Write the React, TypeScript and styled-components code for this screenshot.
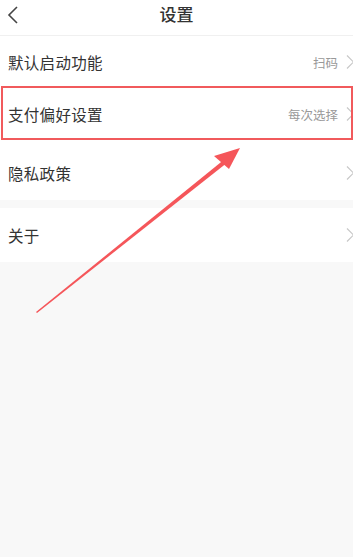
import React from "react";
import styled, { createGlobalStyle } from "styled-components";

const Global = createGlobalStyle`
  html, body { margin: 0; padding: 0; background: #f8f8f8; }
  body { font-family: "Noto Sans CJK SC", "Noto Sans", sans-serif; }
  * { box-sizing: border-box; }
`;

const Page = styled.div`
  position: relative;
  width: 353px;
  height: 557px;
  background: #f8f8f8;
  overflow: hidden;
`;

const Header = styled.div`
  position: relative;
  height: 36px;
  background: #fff;
  border-bottom: 1px solid #f0f0f0;
  display: flex;
  align-items: center;
  justify-content: center;
`;

const BackButton = styled.div`
  position: absolute;
  left: 6px;
  top: 5px;
  width: 14px;
  height: 20px;
  display: flex;
`;

const Title = styled.div`
  font-size: 17px;
  font-weight: 500;
  color: #333;
  margin-top: -9px;
`;

const Group = styled.div<{ gap?: number }>`
  background: #fff;
  margin-bottom: ${(p) => p.gap ?? 0}px;
`;

const Row = styled.div<{ h: number; offset?: number; highlighted?: boolean }>`
  position: relative;
  height: ${(p) => p.h}px;
  display: flex;
  align-items: center;
  padding-left: 8px;
  padding-right: 0;
  padding-top: ${(p) => p.offset ?? 0}px;
  background: #fff;
  ${(p) =>
    p.highlighted
      ? `&::after {
    content: "";
    position: absolute;
    left: 1px;
    right: 0px;
    top: -2px;
    bottom: 0px;
    border: 2px solid #f15a5c;
    pointer-events: none;
  }`
      : ""}
`;

const Label = styled.div`
  flex: 1;
  font-size: 15.5px;
  color: #333;
  letter-spacing: 0.3px;
`;

const Value = styled.div`
  font-size: 12.5px;
  color: #999;
  margin-right: 8px;
`;

const Chevron = styled.div`
  width: 9px;
  height: 16px;
  display: flex;
  margin-right: -2px;
`;

const Arrow = styled.svg`
  position: absolute;
  left: 0;
  top: 0;
  pointer-events: none;
`;

const ChevronIcon = () => (
  <Chevron>
    <svg width="9" height="16" viewBox="0 0 9 16">
      <path d="M1 1.5 L7.5 8 L1 14.5" fill="none" stroke="#c8c8c8" strokeWidth="1.2" />
    </svg>
  </Chevron>
);

export default function App() {
  return (
    <>
      <Global />
      <Page>
        <Header>
          <BackButton>
            <svg width="14" height="20" viewBox="0 0 14 20">
              <path d="M11 2 L3 10 L11 18" fill="none" stroke="#444" strokeWidth="1.6" />
            </svg>
          </BackButton>
          <Title>设置</Title>
        </Header>
        <Group>
          <Row h={52}>
            <Label>默认启动功能</Label>
            <Value>扫码</Value>
            <ChevronIcon />
          </Row>
          <Row h={52} highlighted>
            <Label>支付偏好设置</Label>
            <Value>每次选择</Value>
            <ChevronIcon />
          </Row>
        </Group>
        <Group gap={8}>
          <Row h={60} offset={6}>
            <Label>隐私政策</Label>
            <ChevronIcon />
          </Row>
        </Group>
        <Group>
          <Row h={54}>
            <Label>关于</Label>
            <ChevronIcon />
          </Row>
        </Group>
        <Arrow width="353" height="557" viewBox="0 0 353 557">
          <polygon points="36,312 223,160.5 225.5,164 37,313" fill="#f5565a" />
          <polygon points="240,148 214,156 229,169" fill="#f5565a" />
        </Arrow>
      </Page>
    </>
  );
}
